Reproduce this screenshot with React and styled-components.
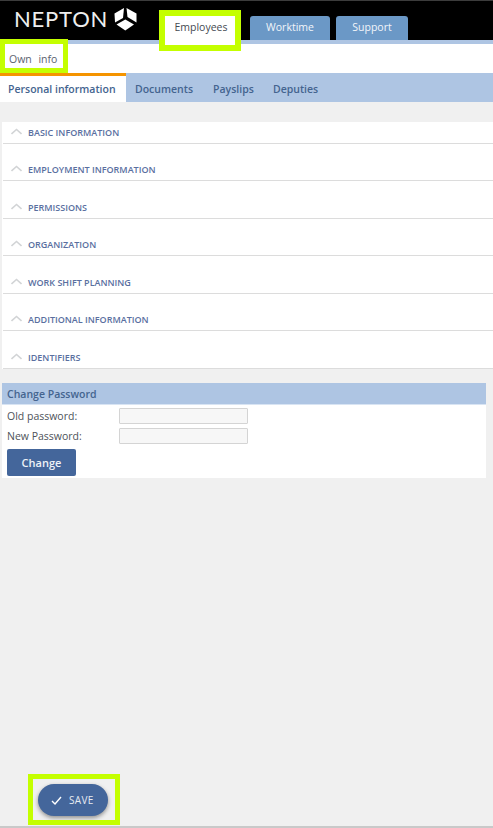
import React from 'react';
import styled, { createGlobalStyle } from 'styled-components';

const Global = createGlobalStyle`
  html, body { margin: 0; padding: 0; background: #f0f0f0; }
  body { font-family: "Open Sans", "Liberation Sans", sans-serif; overflow: hidden; }
  * { box-sizing: border-box; }
`;

const Page = styled.div`
  position: relative;
  width: 493px;
  height: 828px;
  display: flex;
  flex-direction: column;
  background: #f0f0f0;
`;

const TopBar = styled.header`
  height: 40px;
  background: #000;
  border-top: 1px solid #3c3c3c;
  display: flex;
  align-items: flex-end;
  flex-shrink: 0;
`;

const Brand = styled.div`
  width: 161px;
  height: 39px;
  padding: 0 0 3px 14px;
  display: flex;
  align-items: center;
  gap: 6px;
`;

const Wordmark = styled.span`
  font-family: "Lato", "Open Sans", sans-serif;
  font-weight: 400;
  font-size: 22px;
  letter-spacing: 0.8px;
  line-height: 1;
  color: #eeeeee;
`;

const TopTabs = styled.nav`
  display: flex;
  gap: 6px;
  align-items: flex-end;
`;

const TopTab = styled.div`
  height: ${p => (p.$active ? '30px' : '24px')};
  width: ${p => p.$w}px;
  margin-bottom: ${p => (p.$active ? '-5px' : '0')};
  margin-right: ${p => (p.$active ? '3px' : '0')};
  display: flex;
  align-items: ${p => (p.$active ? 'flex-start' : 'center')};
  padding-top: ${p => (p.$active ? '5px' : '0')};
  padding-bottom: ${p => (p.$active ? '0' : '1px')};
  justify-content: center;
  font-size: 10.5px;
  line-height: 15px;
  color: ${p => (p.$active ? '#454a52' : '#f2f5fa')};
  background: ${p => (p.$active ? '#fff' : '#6b98c6')};
  border-radius: 3px 3px 0 0;
  position: relative;
  z-index: 1;
`;

const Stripe = styled.div`
  height: 4px;
  background: #aec5e3;
  flex-shrink: 0;
`;

const SubBar = styled.div`
  height: 29px;
  background: #fff;
  padding: 0 0 0 9px;
  display: flex;
  align-items: center;
  flex-shrink: 0;
  font-size: 10.5px;
  word-spacing: 4px;
  color: #5b6270;
`;

const SectionTabs = styled.div`
  height: 29px;
  background: #aec5e3;
  display: flex;
  flex-shrink: 0;
`;

const SectionTab = styled.div`
  width: ${p => p.$w}px;
  padding: ${p => (p.$active ? '0 0 1px 8px' : '2px 0 0 0')};
  display: flex;
  align-items: center;
  font-size: 10.5px;
  font-weight: 600;
  color: #44648f;
  background: ${p => (p.$active ? '#fff' : 'transparent')};
  border-top: ${p => (p.$active ? '3px solid #f59400' : '0')};
  margin-right: ${p => (p.$active ? '9px' : '0')};
`;

const Accordion = styled.section`
  margin: 20px 0 0 2px;
  background: #fff;
  flex-shrink: 0;
`;

const AccordionRow = styled.div`
  height: 37.5px;
  padding: 0 0 4px 8px;
  margin-left: 1px;
  border-bottom: 1px solid #dcdcdc;
  display: flex;
  align-items: flex-end;
  gap: 6px;
  &:first-child { height: 21.5px; }
`;

const Chevron = styled.svg`
  width: 11px;
  height: 7px;
  margin-bottom: 4px;
  fill: none;
  stroke: #d2d4d6;
  stroke-width: 1.6;
`;

const RowTitle = styled.span`
  font-size: 9px;
  font-weight: 600;
  line-height: 13px;
  color: #5a6f9f;
`;

const PasswordPanel = styled.section`
  margin: 14px 7px 0 2px;
  height: 95px;
  background: #fff;
  flex-shrink: 0;
`;

const PanelHeader = styled.h2`
  margin: 0;
  height: 22px;
  padding-left: 5px;
  background: #aec5e3;
  border-bottom: 1px solid #d8e4f3;
  font-size: 10.5px;
  font-weight: 600;
  line-height: 22px;
  color: #44648f;
`;

const FieldRow = styled.label`
  display: grid;
  grid-template-columns: 112px 129px;
  align-items: center;
  height: 20px;
  padding-left: 5px;
  font-size: 10.5px;
  color: #4d5259;
`;

const Fields = styled.div`
  padding-top: 1px;
`;

const TextInput = styled.input`
  height: 16px;
  width: 129px;
  padding: 0;
  background: #f7f7f7;
  border: 1px solid #d4d4d4;
  border-radius: 1px;
`;

const ChangeButton = styled.button`
  display: block;
  margin: 3px 0 0 5px;
  width: 69px;
  height: 27px;
  border: 0;
  border-radius: 2px;
  background: #44669b;
  color: #eef2f7;
  font: 600 11px "Open Sans", sans-serif;
`;

const Footer = styled.footer`
  margin-top: auto;
  height: 44px;
  padding: 0 0 0 38px;
  border-bottom: 2px solid #c9c9c9;
  flex-shrink: 0;
`;

const SaveButton = styled.button`
  width: 70px;
  height: 32px;
  border: 0;
  border-radius: 16px;
  background: #44669b;
  color: #e6ebf2;
  box-shadow: 0 2px 4px rgba(0, 0, 0, 0.4);
  display: flex;
  align-items: center;
  gap: 7px;
  padding: 0 0 0 13px;
  font: 500 10px "Open Sans", sans-serif;
  letter-spacing: 0.3px;
`;

const Highlight = styled.div`
  position: absolute;
  left: ${p => p.$x}px;
  top: ${p => p.$y}px;
  width: ${p => p.$w}px;
  height: ${p => p.$h}px;
  border: ${p => p.$t}px solid #c4ff00;
  z-index: 5;
  pointer-events: none;
`;

const sections = [
  'BASIC INFORMATION',
  'EMPLOYMENT INFORMATION',
  'PERMISSIONS',
  'ORGANIZATION',
  'WORK SHIFT PLANNING',
  'ADDITIONAL INFORMATION',
  'IDENTIFIERS',
];

export default function App() {
  return (
    <Page>
      <Global />
      <TopBar>
        <Brand>
          <Wordmark>NEPTON</Wordmark>
          <svg width="23" height="24" viewBox="0 0 23 24">
            <path d="M0.5 6.5 L10 1 L9 11 L1 15.5 Z" fill="#fff" />
            <path d="M12.5 1 L22.5 6.5 L22.5 15.5 L13.5 10 Z" fill="#fff" />
            <path d="M11.3 12.5 L20 17.5 L11.3 23.5 L2.5 17.5 Z" fill="#fff" />
          </svg>
        </Brand>
        <TopTabs>
          <TopTab $active $w={80}>Employees</TopTab>
          <TopTab $w={80}>Worktime</TopTab>
          <TopTab $w={72}>Support</TopTab>
        </TopTabs>
      </TopBar>
      <Stripe />
      <SubBar>Own info</SubBar>
      <SectionTabs>
        <SectionTab $active $w={126}>Personal information</SectionTab>
        <SectionTab $w={78}>Documents</SectionTab>
        <SectionTab $w={60}>Payslips</SectionTab>
        <SectionTab $w={60}>Deputies</SectionTab>
      </SectionTabs>
      <Accordion>
        {sections.map(s => (
          <AccordionRow key={s}>
            <Chevron viewBox="0 0 11 7"><path d="M0.5 6 L5.5 1.5 L10.5 6" /></Chevron>
            <RowTitle>{s}</RowTitle>
          </AccordionRow>
        ))}
      </Accordion>
      <PasswordPanel>
        <PanelHeader>Change Password</PanelHeader>
        <Fields>
          <FieldRow>Old password:<TextInput type="text" /></FieldRow>
          <FieldRow>New Password:<TextInput type="text" /></FieldRow>
        </Fields>
        <ChangeButton>Change</ChangeButton>
      </PasswordPanel>
      <Footer>
        <SaveButton>
          <svg width="11" height="9" viewBox="0 0 11 9" fill="none" stroke="#fff" strokeWidth="1.4"><path d="M1 5 L4 8 L10 1" /></svg>
          SAVE
        </SaveButton>
      </Footer>
      <Highlight $x={159} $y={10} $w={82} $h={41} $t={6} />
      <Highlight $x={0} $y={39} $w={68} $h={34} $t={5} />
      <Highlight $x={28} $y={774} $w={92} $h={51} $t={5} />
    </Page>
  );
}
